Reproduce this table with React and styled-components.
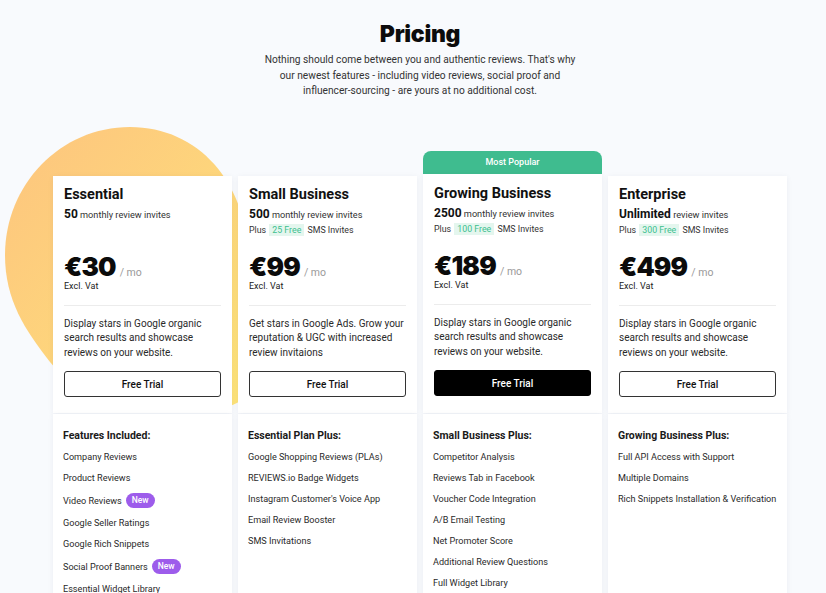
import styled, { createGlobalStyle } from "styled-components";

const Global = createGlobalStyle`
  html, body { margin: 0; padding: 0; }
  body {
    background: #f8fafd;
    font-family: Roboto, "Noto Sans", sans-serif;
    color: #222;
    overflow: hidden;
  }
`;

const Page = styled.div`
  position: relative;
  width: 826px;
  height: 593px;
  padding-left: 14px;
  box-sizing: border-box;
  overflow: hidden;
`;

const Header = styled.header`
  display: flex;
  flex-direction: column;
  align-items: center;
  padding-top: 19px;
`;

const Title = styled.h1`
  margin: 0;
  font-family: Inter, Roboto, sans-serif;
  font-size: 23px;
  line-height: 30px;
  font-weight: 900;
  color: #0c0c0c;
  letter-spacing: -0.3px;
`;

const Lead = styled.p`
  margin: 3px 0 0;
  width: 318px;
  text-align: center;
  font-size: 10.2px;
  line-height: 15.5px;
  color: #333;
`;

const Blob = styled.svg`
  position: absolute;
  left: 0;
  top: 120px;
  z-index: 0;
`;

const Grid = styled.div`
  position: relative;
  z-index: 1;
  display: grid;
  grid-template-columns: repeat(4, 179px);
  gap: 6px;
  justify-content: center;
  align-items: start;
  margin-top: 52px;
`;

const Column = styled.div`
  display: flex;
  flex-direction: column;
  padding-top: ${(p) => (p.$popular ? "0" : "25px")};
`;

const Badge = styled.div`
  height: 23px;
  background: #3fbc8f;
  border-radius: 8px 8px 0 0;
  color: #fff;
  font-size: 9px;
  font-weight: 500;
  display: flex;
  align-items: center;
  justify-content: center;
`;

const Card = styled.div`
  background: #fff;
  box-shadow: 0 1px 6px rgba(20, 30, 60, 0.06);
  padding: ${(p) => (p.$popular ? "11px 11px 17px" : "10px 11px 16px")};
  display: flex;
  flex-direction: column;
`;

const PlanName = styled.h2`
  margin: 0;
  font-size: 14.5px;
  line-height: 18px;
  font-weight: 700;
  color: #111;
`;

const Meta = styled.div`
  margin-top: 3px;
  height: 46px;
  display: flex;
  flex-direction: column;
  gap: 1px;
`;

const Invites = styled.div`
  font-size: 9.2px;
  line-height: 14px;
  color: #333;
  b {
    font-size: 12px;
    font-weight: 700;
    color: #111;
  }
`;

const Sms = styled.div`
  font-size: 8.8px;
  line-height: 14px;
  color: #333;
`;

const Free = styled.span`
  background: #e4f6ee;
  color: #3dbf8e;
  padding: 1px 3px;
  margin: 0 1px;
`;

const PriceRow = styled.div`
  display: flex;
  align-items: baseline;
  gap: 4px;
  height: 27px;
  line-height: 27px;
`;

const Amount = styled.span`
  font-family: Inter, Roboto, sans-serif;
  font-size: 26px;
  font-weight: 900;
  color: #0b0b0b;
  letter-spacing: -0.8px;
`;

const Per = styled.span`
  font-size: 10.5px;
  color: #9a9a9a;
`;

const Vat = styled.div`
  font-size: 9px;
  line-height: 12px;
  color: #222;
`;

const Divider = styled.hr`
  margin: 13px 0 0;
  border: 0;
  border-top: 1px solid #ececec;
`;

const Desc = styled.p`
  margin: 11px 0 0;
  font-size: 10px;
  line-height: 14.5px;
  color: #2a2a2a;
  min-height: 43.5px;
`;

const Button = styled.button`
  margin-top: 11px;
  height: 26px;
  border-radius: 3px;
  border: 1.5px solid ${(p) => (p.$dark ? "#000" : "#333")};
  background: ${(p) => (p.$dark ? "#000" : "#fff")};
  color: ${(p) => (p.$dark ? "#fff" : "#111")};
  font-family: inherit;
  font-size: 10px;
  font-weight: 500;
  cursor: pointer;
`;

const Features = styled.div`
  margin-top: 1px;
  background: #fff;
  box-shadow: 0 1px 6px rgba(20, 30, 60, 0.06);
  padding: 15px 8px 20px 10px;
  display: flex;
  flex-direction: column;
  gap: 7px;
  min-height: 200px;
`;

const FeatureTitle = styled.div`
  font-size: 10.5px;
  line-height: 14px;
  font-weight: 700;
  color: #1a1a1a;
`;

const Feature = styled.div`
  display: flex;
  align-items: center;
  gap: 4px;
  font-size: 9.1px;
  line-height: 14px;
  color: #2a2a2a;
  white-space: nowrap;
`;

const New = styled.span`
  background: #9d5ceb;
  color: #fff;
  font-size: 8.5px;
  font-weight: 500;
  line-height: 15px;
  height: 15px;
  margin: 1px 0;
  padding: 0 6px;
  border-radius: 8px;
`;

const plans = [
  {
    name: "Essential",
    count: "50",
    unit: "monthly review invites",
    price: "€30",
    desc: "Display stars in Google organic search results and showcase reviews on your website.",
    featTitle: "Features Included:",
    features: [
      ["Company Reviews"],
      ["Product Reviews"],
      ["Video Reviews", true],
      ["Google Seller Ratings"],
      ["Google Rich Snippets"],
      ["Social Proof Banners", true],
      ["Essential Widget Library"],
    ],
  },
  {
    name: "Small Business",
    count: "500",
    unit: "monthly review invites",
    sms: "25 Free",
    price: "€99",
    desc: "Get stars in Google Ads. Grow your reputation & UGC with increased review invitaions",
    featTitle: "Essential Plan Plus:",
    features: [
      ["Google Shopping Reviews (PLAs)"],
      ["REVIEWS.io Badge Widgets"],
      ["Instagram Customer's Voice App"],
      ["Email Review Booster"],
      ["SMS Invitations"],
    ],
  },
  {
    name: "Growing Business",
    count: "2500",
    unit: "monthly review invites",
    sms: "100 Free",
    price: "€189",
    popular: true,
    desc: "Display stars in Google organic search results and showcase reviews on your website.",
    featTitle: "Small Business Plus:",
    features: [
      ["Competitor Analysis"],
      ["Reviews Tab in Facebook"],
      ["Voucher Code Integration"],
      ["A/B Email Testing"],
      ["Net Promoter Score"],
      ["Additional Review Questions"],
      ["Full Widget Library"],
    ],
  },
  {
    name: "Enterprise",
    count: "Unlimited",
    unit: "review invites",
    sms: "300 Free",
    price: "€499",
    desc: "Display stars in Google organic search results and showcase reviews on your website.",
    featTitle: "Growing Business Plus:",
    features: [
      ["Full API Access with Support"],
      ["Multiple Domains"],
      ["Rich Snippets Installation & Verification"],
    ],
  },
];

export default function App() {
  return (
    <Page>
      <Global />
      <Blob width="260" height="320" viewBox="0 120 260 320">
        <defs>
          <linearGradient id="blobGrad" x1="0" y1="0" x2="1" y2="1">
            <stop offset="0" stopColor="#fdc47e" />
            <stop offset="1" stopColor="#fee57a" />
          </linearGradient>
        </defs>
        <path
          d="M130,127 C200,127 248,185 248,260 L248,390 C248,408 200,416 150,410 C100,402 72,388 50,362 C25,330 5,300 5,255 C5,185 60,127 130,127 Z"
          fill="url(#blobGrad)"
        />
      </Blob>
      <Header>
        <Title>Pricing</Title>
        <Lead>
          Nothing should come between you and authentic reviews. That's why our newest
          features - including video reviews, social proof and influencer-sourcing - are
          yours at no additional cost.
        </Lead>
      </Header>
      <Grid>
        {plans.map((p) => (
          <Column key={p.name} $popular={p.popular}>
            {p.popular && <Badge>Most Popular</Badge>}
            <Card $popular={p.popular}>
              <PlanName>{p.name}</PlanName>
              <Meta>
                <Invites>
                  <b>{p.count}</b> {p.unit}
                </Invites>
                {p.sms && (
                  <Sms>
                    Plus <Free>{p.sms}</Free> SMS Invites
                  </Sms>
                )}
              </Meta>
              <PriceRow>
                <Amount>{p.price}</Amount>
                <Per>/ mo</Per>
              </PriceRow>
              <Vat>Excl. Vat</Vat>
              <Divider />
              <Desc>{p.desc}</Desc>
              <Button $dark={p.popular}>Free Trial</Button>
            </Card>
            <Features>
              <FeatureTitle>{p.featTitle}</FeatureTitle>
              {p.features.map(([f, isNew]) => (
                <Feature key={f}>
                  {f}
                  {isNew && <New>New</New>}
                </Feature>
              ))}
            </Features>
          </Column>
        ))}
      </Grid>
    </Page>
  );
}
